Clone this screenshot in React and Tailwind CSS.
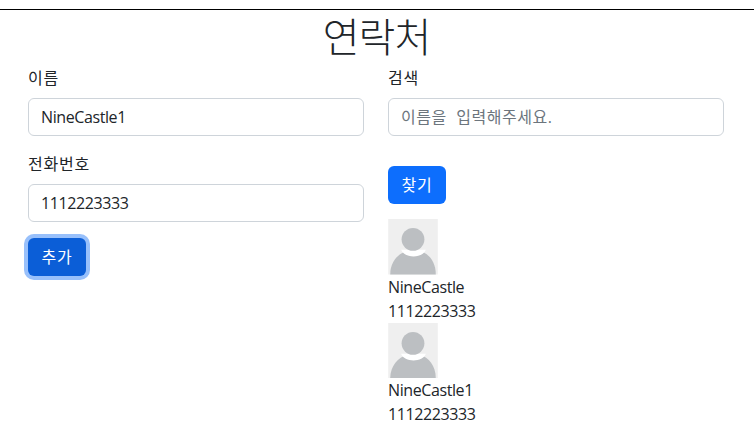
const FONT = "font-['Open_Sans','Noto_Sans_CJK_KR',sans-serif]";

const CONTACTS = [
  { name: 'NineCastle', phone: '1112223333' },
  { name: 'NineCastle1', phone: '1112223333' },
];

function Avatar() {
  return (
    <svg viewBox="0 0 50 56" className="block w-[50px] h-[55.5px]">
      <rect width="50" height="56" fill="#efefef" />
      <path d="M2 56 C2 43 10 35 19 32 L32 32 C41 35 48 43 48 56 Z" fill="#bcbfc2" />
      <path d="M13 31 C16 40 35 40 38 31 Z" fill="#fff" />
      <circle cx="25" cy="20.5" r="11.5" fill="#bcbfc2" />
    </svg>
  );
}

function Field({ label, value, placeholder }) {
  return (
    <>
      <label className="block mb-2 h-6 leading-6 tracking-[0.8px]">{label}</label>
      <input
        readOnly
        value={value}
        placeholder={placeholder}
        className="block w-full h-[38px] px-3 border border-[#ced4da] rounded-md bg-white text-[#212529] tracking-[-0.4px] placeholder:text-[#6c757d] placeholder:tracking-[0.5px] placeholder:[word-spacing:5px] outline-none"
      />
    </>
  );
}

export default function App() {
  return (
    <div className={`${FONT} text-base leading-6 text-[#212529] bg-white min-h-[439px]`}>
      <div className="h-[10px] border-b border-black" />
      <h1 className="text-[40px] h-12 leading-[54px] text-center font-light tracking-[-1px] mb-2 pr-px">연락처</h1>
      <div className="w-[720px] ml-4 px-3 grid grid-cols-2 gap-x-6">
        <div>
          <div className="mb-4">
            <Field label="이름" value="NineCastle1" />
          </div>
          <div className="mb-4">
            <Field label="전화번호" value="1112223333" />
          </div>
          <button className="block w-[58px] h-[38px] rounded-md bg-[#0b5ed7] text-white tracking-[0.8px] ring-4 ring-[#98c0fb]">추가</button>
        </div>
        <div>
          <div className="mb-[30px]">
            <Field label="검색" value="" placeholder="이름을 입력해주세요." />
          </div>
          <button className="block w-[58px] h-[38px] rounded-md bg-[#0d6efd] text-white tracking-[0.8px] mb-[15px]">찾기</button>
          {CONTACTS.map((c) => (
            <div key={c.name}>
              <Avatar />
              <div className="tracking-[-0.4px]">{c.name}</div>
              <div className="tracking-[-0.4px]">{c.phone}</div>
            </div>
          ))}
        </div>
      </div>
    </div>
  );
}
